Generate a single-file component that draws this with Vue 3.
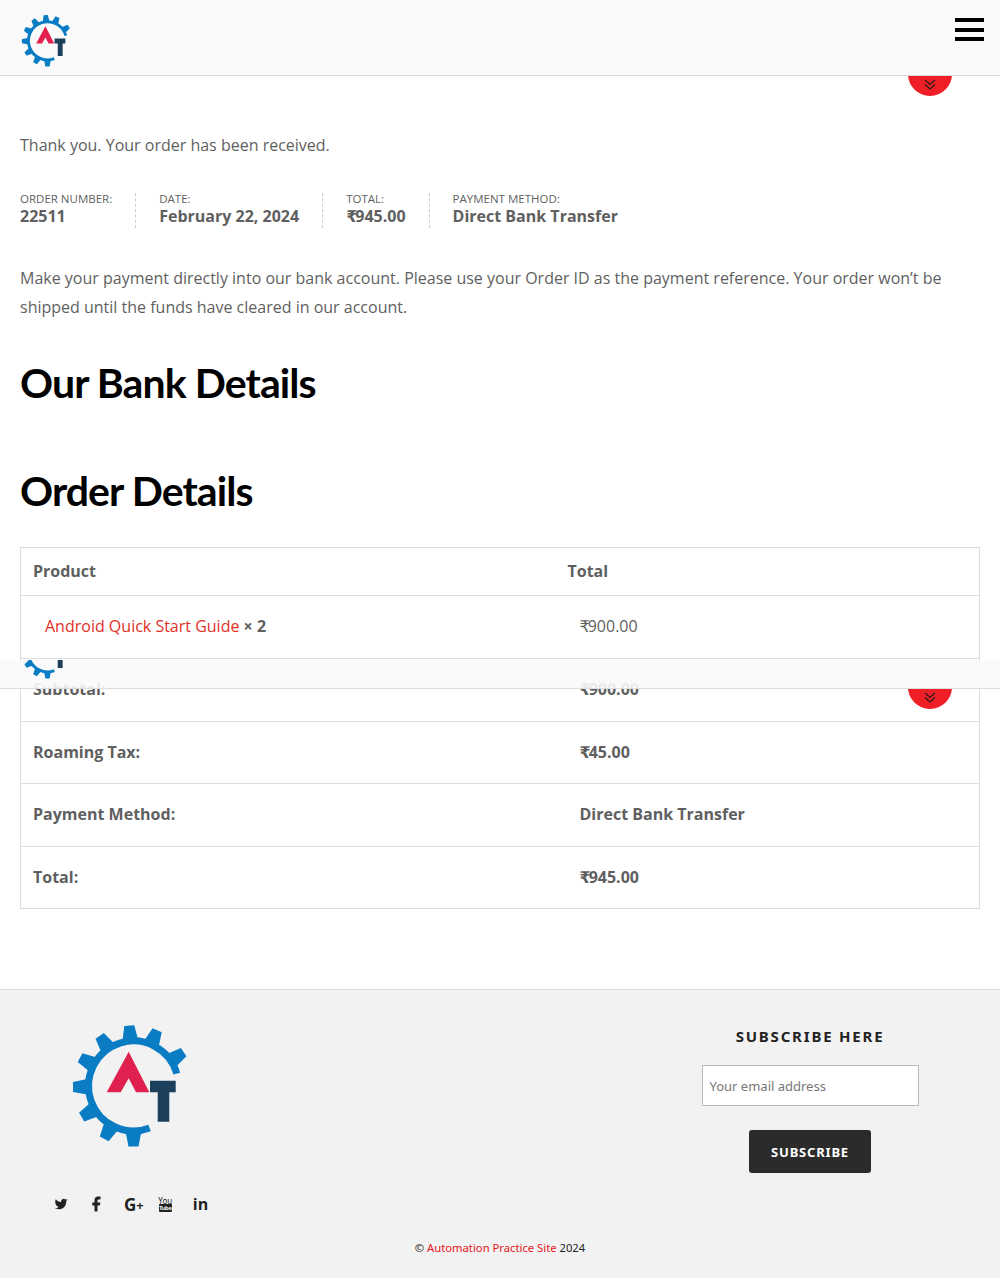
<template>
  <div class="page">
    <svg class="defs" width="0" height="0">
      <symbol id="at-logo" viewBox="0 0 118 126">
        <path d="M78.600 105A45 45 0 1 1 105.800 50.600" fill="none" stroke="#0a7cc4" stroke-width="7" />
        <polygon
          v-for="a in toothAngles"
          :key="a"
          points="45,-8 60.5,-5 60.5,5 45,8"
          fill="#0a7cc4"
          :transform="`translate(62.5 63) rotate(${a})`"
        />
        <polygon points="57.7,28.7 78.3,69.3 65,69.3 57.7,55.3 49.7,69.3 35.7,69.3" fill="#e0214f" />
        <polygon points="79,57.7 104.7,57.7 104.7,69.3 98.3,69.3 98.3,98.7 86.7,98.7 86.7,69.3 79,69.3" fill="#1c3f5c" />
      </symbol>
    </svg>

    <header class="topbar">
      <svg class="logo-small"><use href="#at-logo" /></svg>
      <div class="burger"><span></span><span></span><span></span></div>
    </header>
    <div class="scroll-tab first">
      <div class="tab-circle">
        <svg width="12" height="11" viewBox="0 0 12 11"><path d="M1 1l5 4.500L11 1M1 5.500L6 10l5-4.500" fill="none" stroke="#2b1a1a" stroke-width="1.200" /></svg>
      </div>
    </div>

    <main class="content">
      <p class="thanks">Thank you. Your order has been received.</p>
      <ul class="meta">
        <li v-for="m in meta" :key="m.label">
          <span class="meta-label">{{ m.label }}</span>
          <strong><span v-if="m.money" class="rs">₹</span>{{ m.value }}</strong>
        </li>
      </ul>
      <p class="note">Make your payment directly into our bank account. Please use your Order ID as the payment reference. Your order won’t be shipped until the funds have cleared in our account.</p>
      <h2 class="bank">Our Bank Details</h2>
      <h2 class="order">Order Details</h2>
      <table>
        <thead>
          <tr><th class="col-a">Product</th><th>Total</th></tr>
        </thead>
        <tbody>
          <tr>
            <td><a href="#" class="link">Android Quick Start Guide</a> <strong>× 2</strong></td>
            <td><span class="rs">₹</span>900.00</td>
          </tr>
        </tbody>
        <tfoot>
          <tr v-for="r in totals" :key="r.name">
            <th>{{ r.name }}</th>
            <td><strong><span v-if="r.money" class="rs">₹</span>{{ r.value }}</strong></td>
          </tr>
        </tfoot>
      </table>
    </main>

    <footer class="footer">
      <div class="foot-left">
        <svg class="logo-big"><use href="#at-logo" /></svg>
        <div class="social">
          <svg class="tw" width="14" height="14" viewBox="0 0 24 24"><path d="M23 3a10.900 10.900 0 0 1-3 1.500 4.480 4.480 0 0 0-7.860 3v1A10.660 10.660 0 0 1 3 4s-4 9 5 13a11.640 11.640 0 0 1-7 2c9 5 20 0 20-11.500a4.500 4.500 0 0 0-.08-.83A7.720 7.720 0 0 0 23 3z" fill="#222" /></svg>
          <svg class="fb" width="18" height="18" viewBox="0 0 24 24"><path d="M18 2h-3a5 5 0 0 0-5 5v3H7v4h3v8h4v-8h3l1-4h-4V7a1 1 0 0 1 1-1h3z" fill="#222" /></svg>
          <span class="gplus">G<small>+</small></span>
          <span class="yt">
            <span class="yt-you">You</span>
            <span class="yt-tube">Tube</span>
          </span>
          <span class="in">in</span>
        </div>
      </div>
      <div class="subscribe">
        <h4>SUBSCRIBE HERE</h4>
        <input type="text" placeholder="Your email address" />
        <button type="button">SUBSCRIBE</button>
      </div>
      <p class="copy">© <a href="#">Automation Practice Site</a> 2024</p>
    </footer>

    <!-- sticky header caught half way in the full page capture -->
    <div class="sticky-strip">
      <svg class="logo-small strip-logo"><use href="#at-logo" /></svg>
    </div>
    <div class="scroll-tab second">
      <div class="tab-circle">
        <svg width="12" height="11" viewBox="0 0 12 11"><path d="M1 1l5 4.500L11 1M1 5.500L6 10l5-4.500" fill="none" stroke="#2b1a1a" stroke-width="1.200" /></svg>
      </div>
    </div>
  </div>
</template>

<script setup>
const toothAngles = [90, 119, 149, 179, 208, 236, 266, 293, 326]

const meta = [
  { label: 'ORDER NUMBER:', value: '22511' },
  { label: 'DATE:', value: 'February 22, 2024' },
  { label: 'TOTAL:', value: '945.00', money: true },
  { label: 'PAYMENT METHOD:', value: 'Direct Bank Transfer' }
]

const totals = [
  { name: 'Subtotal:', value: '900.00', money: true },
  { name: 'Roaming Tax:', value: '45.00', money: true },
  { name: 'Payment Method:', value: 'Direct Bank Transfer' },
  { name: 'Total:', value: '945.00', money: true }
]
</script>

<style>
html, body {
  background: #fff;
}
</style>

<style scoped>
.page {
  position: relative;
  width: 1000px;
  font-family: "Open Sans", "Liberation Sans", "DejaVu Sans", sans-serif;
  font-size: 16px;
  color: #5f5f5f;
}
.defs {
  position: absolute;
}
.rs {
  letter-spacing: -2px;
}
.topbar {
  box-sizing: border-box;
  height: 76px;
  padding: 14px 16px 0 21px;
  display: flex;
  justify-content: space-between;
  background: #fafafa;
  border-bottom: 1px solid #ddd;
}
.logo-small {
  width: 50px;
  height: 53.600px;
}
.burger {
  width: 29px;
  padding-top: 4px;
}
.burger span {
  display: block;
  height: 4px;
  margin-bottom: 5.500px;
  background: #000;
}
.scroll-tab {
  position: absolute;
  left: 908px;
  width: 44px;
  height: 20px;
  overflow: hidden;
}
.first {
  top: 76px;
}
.second {
  top: 689px;
}
.tab-circle {
  box-sizing: border-box;
  width: 44px;
  height: 44px;
  margin-top: -24px;
  padding-top: 27px;
  border-radius: 50%;
  background: #f01e27;
  display: flex;
  justify-content: center;
}
.tab-circle svg {
  display: block;
}
.content {
  padding: 0 20px;
}
.thanks {
  margin: 0;
  padding-top: 57px;
  line-height: 24px;
}
.meta {
  display: flex;
  list-style: none;
  margin: 0;
  padding: 36px 0 0;
}
.meta li {
  padding-right: 23px;
  margin-right: 23px;
  border-right: 1px dashed #ccc;
  height: 35px;
}
.meta li:last-child {
  border-right: 0;
}
.meta-label {
  display: block;
  font-size: 11.500px;
  line-height: 12px;
}
.meta strong {
  display: block;
  line-height: 23px;
}
.note {
  margin: 0;
  padding-top: 36px;
  line-height: 29px;
}
h2 {
  margin: 0;
  font-family: Lato, "Open Sans", sans-serif;
  font-size: 41px;
  font-weight: 700;
  line-height: 50px;
  letter-spacing: -0.9px;
  color: #000;
}
.bank {
  padding-top: 36px;
}
.order {
  padding-top: 58px;
}
table {
  width: 960px;
  margin-top: 31px;
  border-collapse: collapse;
  table-layout: fixed;
}
th, td {
  box-sizing: border-box;
  border: 1px solid #ddd;
  border-left: 0;
  border-right: 0;
  text-align: left;
  padding: 0 12px;
  font-weight: 700;
  height: 62.500px;
  line-height: 24px;
}
tr > :first-child {
  border-left: 1px solid #ddd;
}
tr > :last-child {
  border-right: 1px solid #ddd;
}
thead th {
  height: 48px;
  padding-bottom: 2px;
}
tbody td {
  height: 63px;
  padding-bottom: 2px;
}
tfoot th, tfoot td {
  padding-bottom: 1px;
}
.col-a {
  width: 535px;
}
td {
  font-weight: 400;
  padding-left: 24px;
  padding-right: 24px;
}
.link {
  color: #e2301f;
  text-decoration: none;
}
.footer {
  position: relative;
  box-sizing: border-box;
  height: 289px;
  margin-top: 80px;
  border-top: 1px solid #ddd;
  background: #f2f2f2;
  display: flex;
  justify-content: space-between;
  font-family: "Noto Sans", "Open Sans", sans-serif;
}
.foot-left {
  padding: 33px 0 0 54px;
}
.logo-big {
  display: block;
  width: 118px;
  height: 126px;
  margin-left: 17px;
}
.social {
  display: flex;
  align-items: center;
  height: 20px;
  margin-top: 45px;
  color: #222;
}
.fb {
  margin-left: 19px;
}
.gplus {
  margin-left: 19px;
  font-family: "Open Sans", sans-serif;
  font-weight: 700;
  font-size: 17px;
}
.gplus small {
  font-size: 13px;
  vertical-align: 1px;
}
.yt {
  margin-left: 15px;
  width: 13px;
  display: flex;
  flex-direction: column;
  align-items: center;
}
.yt-you {
  font-size: 8px;
  line-height: 7px;
}
.yt-tube {
  width: 13px;
  height: 8px;
  background: #222;
  border-radius: 1px;
  color: #f1f1f1;
  font-size: 6px;
  line-height: 8px;
  text-align: center;
  font-weight: 700;
  letter-spacing: -0.5px;
}
.in {
  margin-left: 21px;
  font-family: "Open Sans", sans-serif;
  font-weight: 700;
  font-size: 16px;
  line-height: 20px;
}
.subscribe {
  width: 340px;
  margin-right: 20px;
  padding-top: 35px;
  display: flex;
  flex-direction: column;
  align-items: center;
}
.subscribe h4 {
  margin: 0;
  font-size: 15px;
  line-height: 22px;
  font-weight: 700;
  letter-spacing: 1.800px;
  color: #222;
}
.subscribe input {
  box-sizing: border-box;
  width: 217px;
  height: 41px;
  margin-top: 18px;
  padding: 0 7px;
  border: 1px solid #bbb;
  background: #fff;
  font-family: inherit;
  font-size: 13px;
}
.subscribe input::placeholder {
  color: #777;
  opacity: 1;
}
.subscribe button {
  width: 122px;
  height: 43px;
  margin-top: 24px;
  padding: 1px 0 0;
  border: 0;
  border-radius: 3px;
  background: #2b2b2b;
  color: #fff;
  font-family: inherit;
  font-size: 13px;
  font-weight: 700;
  letter-spacing: 0.800px;
}
.copy {
  position: absolute;
  left: 0;
  right: 0;
  top: 250px;
  margin: 0;
  text-align: center;
  font-size: 11.250px;
  line-height: 16px;
  color: #222;
}
.copy a {
  color: #e8141c;
  text-decoration: none;
}
.sticky-strip {
  position: absolute;
  left: 0;
  top: 660px;
  width: 1000px;
  height: 29px;
  overflow: hidden;
  box-sizing: border-box;
  border-bottom: 1px solid #ddd;
  background: rgba(250, 250, 250, 0.9);
}
.strip-logo {
  display: block;
  margin: -34px 0 0 21px;
}
</style>
